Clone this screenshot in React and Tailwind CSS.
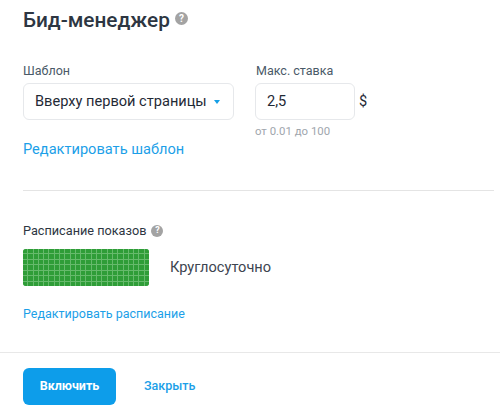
const FONT = { fontFamily: "Roboto, sans-serif" };

function Help({ className = "" }) {
  return (
    <span className={`inline-flex items-center justify-center rounded-full bg-[#a3a3a3] text-white font-bold leading-none ${className}`}>
      ?
    </span>
  );
}

function ScheduleGrid() {
  const cells = Array.from({ length: 24 * 7 });
  return (
    <div className="grid grid-cols-[repeat(24,1fr)] grid-rows-[repeat(7,1fr)] gap-px w-[126px] h-[37px] rounded-[3px] overflow-hidden bg-[#66ba6c]">
      {cells.map((_, i) => (
        <div key={i} className="bg-[#2f9d38]" />
      ))}
    </div>
  );
}

export default function App() {
  return (
    <div className="w-[500px] h-[417px] bg-white overflow-hidden text-[#333d4a]" style={FONT}>
      <div className="pl-[23px] pr-[6px]">
        <div className="flex items-center gap-[5px] pt-[2px] h-[37px]">
          <h1 className="text-[20.8px] leading-[30px] font-medium text-[#2d3642]">Бид-менеджер</h1>
          <Help className="w-[13px] h-[13px] text-[10px] -mt-[2px]" />
        </div>

        <div className="flex gap-[21px] pt-[26px]">
          <div className="w-[211px]">
            <div className="text-[12.5px] leading-[15px] text-[#4a5a68]">Шаблон</div>
            <div className="mt-[5px] h-[37px] w-[211px] flex items-center justify-between pl-[11px] pr-[13px] border border-[#e6e8eb] rounded-[6px] text-[14.6px] text-[#1f2a36]">
              <span>Вверху первой страницы</span>
              <span className="w-0 h-0 border-l-[3px] border-r-[3px] border-t-[4px] border-l-transparent border-r-transparent border-t-[#159fe6]" />
            </div>
            <a className="block mt-[20px] text-[14.6px] leading-[18px] text-[#1c9fe8]">Редактировать шаблон</a>
          </div>
          <div>
            <div className="pl-px text-[12.5px] leading-[15px] text-[#4a5a68]">Макс. ставка</div>
            <div className="mt-[5px] flex items-center gap-[4px]">
              <div className="h-[37px] w-[100px] flex items-center pl-[11px] border border-[#e6e8eb] rounded-[6px] text-[14.6px] text-[#1f2a36]">2,5</div>
              <span className="text-[14.6px] text-[#1f2a36]">$</span>
            </div>
            <div className="mt-[4px] text-[11.4px] leading-[14px] text-[#a0a6ad]">от 0.01 до 100</div>
          </div>
        </div>

        <div className="mt-[32px] h-px bg-[#e4e4e4]" />

        <div className="mt-[32px] flex items-center gap-[5px]">
          <span className="text-[12.7px] leading-[15px] text-[#2d3642]">Расписание показов</span>
          <Help className="w-[12px] h-[12px] text-[9px]" />
        </div>
        <div className="mt-[11px] flex items-center gap-[21px]">
          <ScheduleGrid />
          <span className="text-[14.6px] text-[#3d4550]">Круглосуточно</span>
        </div>
        <a className="block mt-[20px] text-[12.5px] leading-[15px] text-[#1c9fe8]">Редактировать расписание</a>
      </div>

      <div className="mt-[31px] h-px bg-[#e8e8e8]" />

      <div className="flex items-center gap-[28px] pl-[23px] pt-[15px]">
        <button className="w-[93px] h-[37px] rounded-[6px] bg-[#0d9dea] text-white text-[12.5px] font-bold">Включить</button>
        <a className="text-[12.5px] font-medium text-[#1c9fe8]">Закрыть</a>
      </div>
    </div>
  );
}
